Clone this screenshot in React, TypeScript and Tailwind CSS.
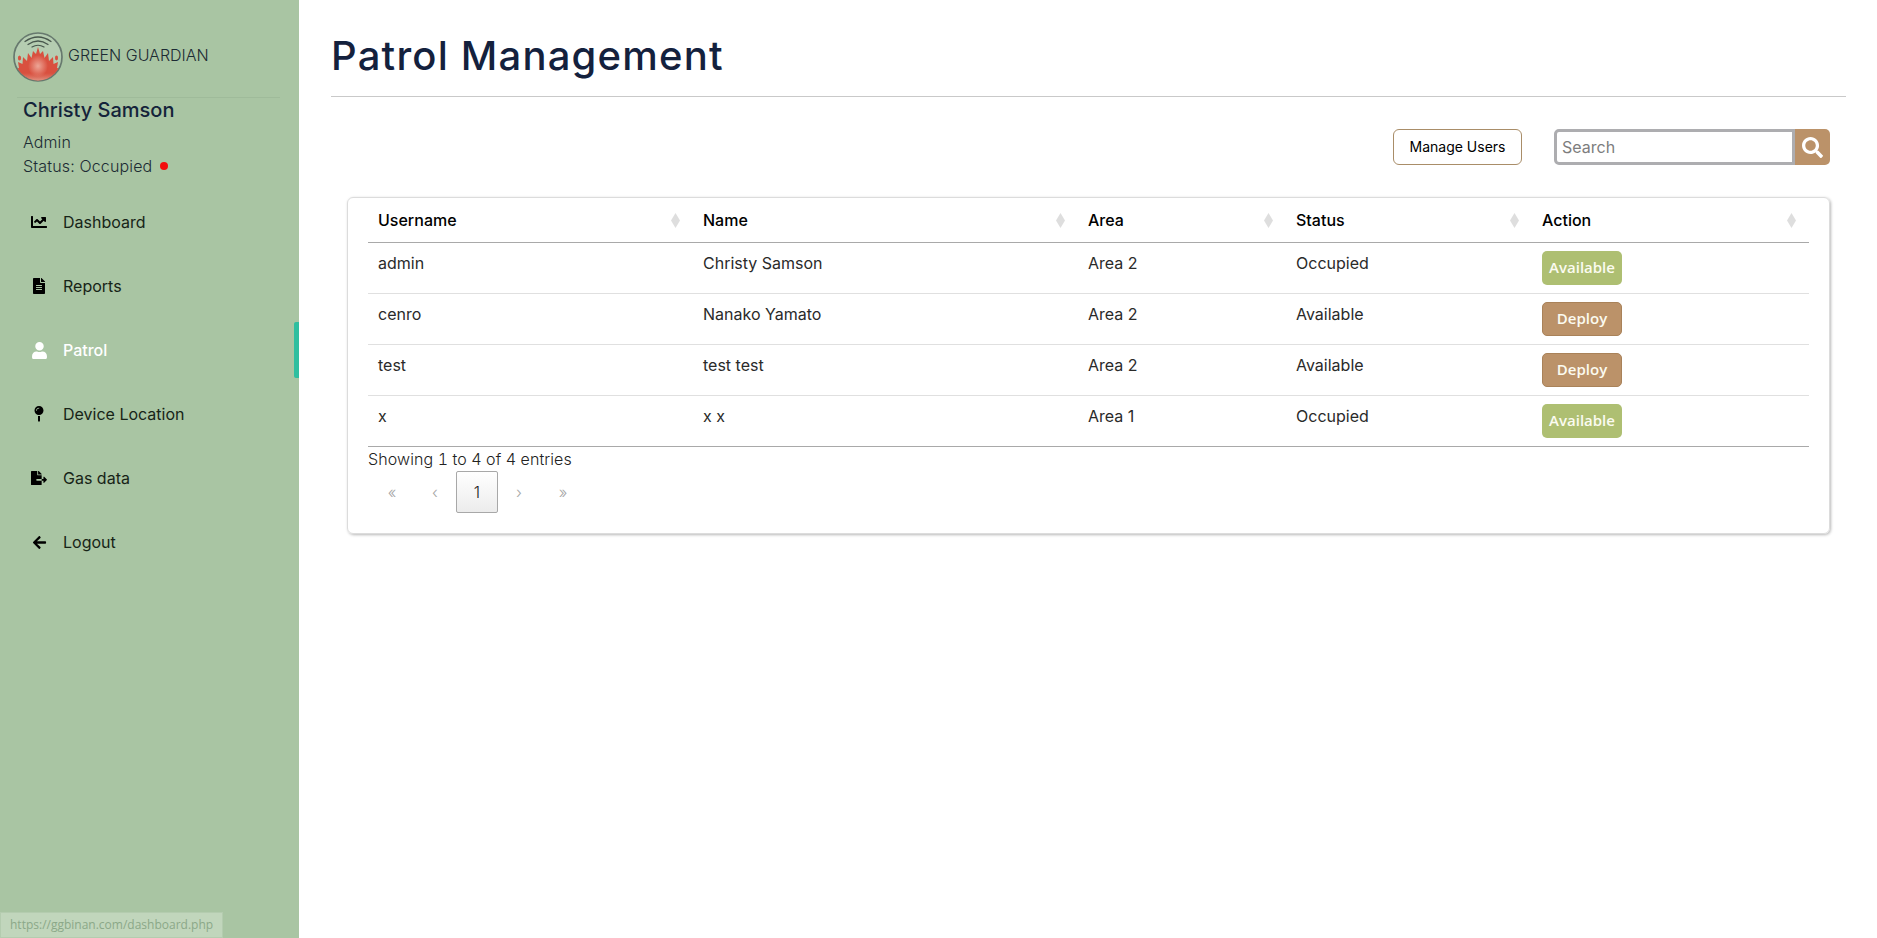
import React from "react";
import { FaChartLine, FaFileAlt, FaUser, FaMapPin, FaFileExport, FaArrowLeft, FaSearch } from "react-icons/fa";

const nav = [
  { label: "Dashboard", Icon: FaChartLine, size: 16 },
  { label: "Reports", Icon: FaFileAlt, size: 16 },
  { label: "Patrol", Icon: FaUser, size: 17, active: true },
  { label: "Device Location", Icon: FaMapPin, size: 16 },
  { label: "Gas data", Icon: FaFileExport, size: 16 },
  { label: "Logout", Icon: FaArrowLeft, size: 15 },
];

const rows = [
  ["admin", "Christy Samson", "Area 2", "Occupied", "Available"],
  ["cenro", "Nanako Yamato", "Area 2", "Available", "Deploy"],
  ["test", "test test", "Area 2", "Available", "Deploy"],
  ["x", "x x", "Area 1", "Occupied", "Available"],
];

const cols = [
  { label: "Username", w: "w-[325px]" },
  { label: "Name", w: "w-[385px]" },
  { label: "Area", w: "w-[208px]" },
  { label: "Status", w: "w-[246px]" },
  { label: "Action", w: "w-[277px]" },
];

function Logo() {
  return (
    <svg width="52" height="52" viewBox="0 0 52 52" className="shrink-0">
      <defs>
        <radialGradient id="glow" cx="50%" cy="50%" r="50%">
          <stop offset="0%" stopColor="#f0b5a6" stopOpacity="0.85" />
          <stop offset="100%" stopColor="#f0b5a6" stopOpacity="0" />
        </radialGradient>
        <linearGradient id="base" x1="0" y1="0" x2="0" y2="1">
          <stop offset="0%" stopColor="#e08a78" stopOpacity="0" />
          <stop offset="100%" stopColor="#e2b3a3" />
        </linearGradient>
        <clipPath id="cc">
          <circle cx="26" cy="26" r="23.5" />
        </clipPath>
      </defs>
      <circle cx="26" cy="26" r="24" fill="#b5cdb1" stroke="#67796e" strokeWidth="1.7" />
      <g fill="none" stroke="#47564c" strokeLinecap="round">
        <path d="M13 10.5 Q26 1.5 39 10.5" strokeWidth="1.3" />
        <path d="M16 13.5 Q26 6.5 36 13.5" strokeWidth="1.3" />
        <path d="M20 16 Q26 12.5 32 16" strokeWidth="1.2" />
      </g>
      <g clipPath="url(#cc)">
        <path
          d="M26 16 L28 23 L31 20 L32.5 27 L36 22 L37 30 L41 26 L41.5 33 L46 31 L45 37 L49 38 L44 52 L8 52 L3 38 L7 37 L6 31 L10.5 33 L11 26 L15 30 L16 22 L19.5 27 L21 20 L24 23 Z"
          fill="#d9503f"
        />
        <ellipse cx="7.5" cy="27" rx="1.6" ry="2.6" fill="#d9503f" />
        <ellipse cx="44.5" cy="27" rx="1.5" ry="2.4" fill="#d9503f" />
        <ellipse cx="26" cy="35" rx="10" ry="11" fill="url(#glow)" />
        <rect x="0" y="42" width="52" height="10" fill="url(#base)" />
      </g>
    </svg>
  );
}

function SortIcon() {
  return (
    <svg width="9" height="15" viewBox="0 0 9 15" className="absolute right-[13px] top-[8px]">
      <polygon points="4.5,0 9,7.5 4.5,15 0,7.5" fill="#dedede" />
    </svg>
  );
}

function ActionButton({ label }: { label: string }) {
  const green = label === "Available";
  return (
    <button
      className={`w-[80px] h-[34px] rounded-[5px] text-[#fbfbf0] text-[15px] font-semibold font-['Open_Sans',sans-serif] block ${
        green ? "bg-[#aebf72]" : "bg-[#bb9269] border border-[#a98259]"
      }`}
    >
      {label}
    </button>
  );
}

export default function App() {
  return (
    <div className="relative flex min-h-[938px] bg-white font-['Inter',sans-serif] overflow-hidden">
      <aside className="w-[299px] shrink-0 bg-[#a9c5a3] h-[938px]">
        <div className="flex items-start gap-[4px] pl-[12px] pt-[31px] h-[97px]">
          <Logo />
          <span className="text-[16px] font-light text-[#1c2b33] mt-[12px] leading-[24px]">GREEN GUARDIAN</span>
        </div>
        <div className="mx-[17px] w-[263px] border-t border-[#9fbb9a]" />
        <div className="pl-[23px]">
          <div className="text-[20px] font-medium leading-[24px] text-[#14233a]">Christy Samson</div>
          <div className="text-[16px] font-light leading-[24px] text-[#1c2b33] mt-[8px] tracking-[0.1px]">Admin</div>
          <div className="flex items-center text-[16px] font-light leading-[24px] text-[#1c2b33] tracking-[0.15px]">
            Status: Occupied
            <span className="ml-[8px] w-[8px] h-[8px] rounded-full bg-[#f30c0c]" />
          </div>
        </div>
        <nav className="mt-[12px]">
          {nav.map(({ label, Icon, size, active }) => (
            <div key={label} className="relative flex items-center h-[64px] pl-[63px]">
              <span className={`absolute left-[29px] w-[20px] flex justify-center ${active ? "text-white" : "text-black"}`}>
                <Icon size={size} />
              </span>
              <span className={`text-[16px] ${active ? "text-white font-medium" : "text-[#172417] font-normal"}`}>{label}</span>
              {active && <span className="absolute right-0 top-[4px] w-[5px] h-[56px] rounded-l-[2px] bg-[#2fbf9f]" />}
            </div>
          ))}
        </nav>
      </aside>

      <main className="flex-1 min-w-0 pl-[32px] pr-[31px]">
        <h1 className="text-[40px] font-medium leading-[48px] tracking-[1.2px] text-[#14213d] pt-[32px] pb-[16px] h-[96px]">
          Patrol Management
        </h1>
        <div className="border-t border-[#c9c9c9]" />

        <div className="flex justify-end mt-[32px] mr-[16px]">
          <button className="w-[129px] h-[36px] rounded-[6px] border border-[#a98d68] bg-white text-[14px] text-black pb-[2px]">
            Manage Users
          </button>
          <div className="flex ml-[32px]">
            <div className="w-[241px] h-[36px] border-[3px] border-[#adadb0] rounded-l-[5px] bg-white flex items-center pl-[5px] text-[16px] text-[#7d7d7d]">
              Search
            </div>
            <div className="w-[35px] h-[36px] bg-[#bb9269] rounded-r-[5px] flex items-center justify-center text-white">
              <FaSearch size={21} />
            </div>
          </div>
        </div>

        <div className="mt-[32px] mx-[16px] h-[337px] rounded-[6px] border border-[#dcdcdc] shadow-[1px_1px_3px_rgba(0,0,0,0.28)] px-[20px] pt-[7px]">
          <table className="w-[1441px] table-fixed border-collapse text-[16px]">
            <thead>
              <tr className="h-[37px] border-b border-[#a9a9a9]">
                {cols.map((c) => (
                  <th key={c.label} className={`${c.w} relative text-left font-medium text-black pl-[10px] pb-[6px] leading-[20px]`}>
                    {c.label}
                    <SortIcon />
                  </th>
                ))}
              </tr>
            </thead>
            <tbody>
              {rows.map((r, i) => (
                <tr key={r[0]} className={`h-[51px] border-b ${i === 3 ? "border-[#a9a9a9]" : "border-[#e0e0e0]"}`}>
                  {r.slice(0, 4).map((v, j) => (
                    <td key={j} className="pl-[10px] pt-[8px] pb-[14px] align-top font-normal text-[#2a2a2a] leading-[24px]">
                      {v}
                    </td>
                  ))}
                  <td className="pl-[10px] align-middle">
                    <ActionButton label={r[4]} />
                  </td>
                </tr>
              ))}
            </tbody>
          </table>
          <div className="text-[16px] font-light leading-[24px] text-[#222] tracking-[0.1px] tabular-nums">Showing 1 to 4 of 4 entries</div>
          <div className="flex items-center ml-[8px] text-[#a6a6a6] text-[16px] font-light">
            <span className="w-[32px] text-center">«</span>
            <span className="w-[48px] pl-[6px] text-center">‹</span>
            <span className="w-[42px] h-[42px] border border-[#a8a8a8] rounded-[2px] bg-gradient-to-b from-white to-[#ececec] flex items-center justify-center text-[16px] text-[#222]">
              1
            </span>
            <span className="w-[42px] text-center">›</span>
            <span className="w-[46px] text-center">»</span>
          </div>
        </div>
      </main>

      <div className="absolute left-0 bottom-0 w-[223px] h-[26px] bg-[#c1d6bc] border border-[#b4ccaf] flex items-center pl-[9px] text-[12px] text-[#8ba888] font-['Open_Sans',sans-serif]">
        https://ggbinan.com/dashboard.php
      </div>
    </div>
  );
}
